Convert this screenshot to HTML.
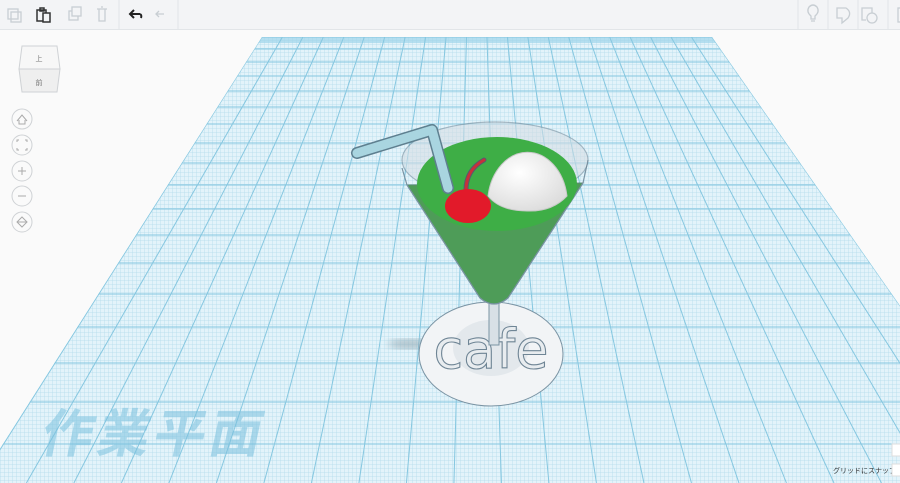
<!DOCTYPE html>
<html><head><meta charset="utf-8"><style>
html,body{margin:0;padding:0}
body{width:900px;height:483px;overflow:hidden;background:#fafafa;position:relative;font-family:"Liberation Sans","Noto Sans CJK JP",sans-serif}
#tb{position:absolute;left:0;top:0;width:900px;height:29px;background:#f3f4f6;border-bottom:1px solid #e2e5e8}
</style></head><body>
<svg width="900" height="483" style="position:absolute;left:0;top:0">
<defs>
<clipPath id="gc"><polygon points="262,37 712,37 1024,483 -22,483"/></clipPath>
<pattern id="fine" width="4" height="4" patternUnits="userSpaceOnUse"><path d="M0 0H4M0 0V4" stroke="#b3dcec" stroke-width="0.8" fill="none"/></pattern>
<filter id="bl"><feGaussianBlur stdDeviation="4"/></filter>
<radialGradient id="bg" cx="0.4" cy="0.35" r="0.7"><stop offset="0" stop-color="#ffffff"/><stop offset="1" stop-color="#dcdcdc"/></radialGradient>
</defs>
<g clip-path="url(#gc)">
<rect x="0" y="0" width="900" height="483" fill="#e3f3fa"/>
<rect x="0" y="0" width="900" height="483" fill="url(#fine)"/>
<polygon points="262,37 712,37 716,43 258,43" fill="#9fd4ea" opacity=".7"/>
<g stroke="#86c7e0" stroke-width="1" id="vl"></g>
<g stroke="#86c7e0" stroke-width="1" id="hl"></g>
<text x="40" y="452" font-size="52" font-weight="bold" fill="#7cc1de" opacity=".55" transform="skewX(-12) translate(95,0)" font-family="'Noto Sans CJK JP',sans-serif" letter-spacing="4">作業平面</text>
</g>
<ellipse cx="410" cy="344" rx="22" ry="5" fill="#8aa0aa" opacity=".6" filter="url(#bl)"/>
<!-- base disc -->
<ellipse cx="491" cy="354" rx="72" ry="52" fill="#f2f4f6" stroke="#7a93a3" stroke-width="1"/>
<ellipse cx="491" cy="348" rx="38" ry="28" fill="#dfe5ea" opacity=".8"/>
<text x="491" y="368" text-anchor="middle" font-size="54" fill="#e8ecef" stroke="#6f8595" stroke-width="1.1" font-family="'DejaVu Sans',sans-serif">cafe</text>
<rect x="489" y="295" width="10" height="50" fill="#d8e0e6" stroke="#7a93a3" stroke-width="1"/>
<!-- cone -->
<path d="M407 185 L480 298 Q494 310 508 298 L583 183 Z" fill="#4e9c58" stroke="#5d8a74" stroke-width="1"/>
<path d="M402 168 L407 185 L480 298 Q494 310 508 298 L583 183 L588 160" fill="none" stroke="#7a93a3" stroke-width="1.2"/>
<ellipse cx="495" cy="160" rx="93" ry="38" fill="#d5dde3" opacity=".55" stroke="#6f8595" stroke-width="1.2"/>
<ellipse cx="497" cy="184" rx="80" ry="47" fill="#3eae46"/>
<!-- ball hemisphere -->
<path d="M488 196 A40 52 0 0 1 567 196 Q552 212 527 211 Q500 211 488 196 Z" fill="url(#bg)" stroke="#c9c9c9" stroke-width="1"/>
<path d="M357 153 L432 130 L448 188" fill="none" stroke="#5e7f8f" stroke-width="12" stroke-linejoin="round" stroke-linecap="round"/>
<path d="M357 153 L432 130 L448 188" fill="none" stroke="#a9d5e0" stroke-width="9" stroke-linejoin="round" stroke-linecap="round"/>
<path d="M466 190 Q466 170 484 160" fill="none" stroke="#51606e" stroke-width="5" stroke-linecap="round"/>
<path d="M466 190 Q466 170 484 160" fill="none" stroke="#c8303a" stroke-width="3" stroke-linecap="round"/>
<ellipse cx="468" cy="206" rx="23" ry="17" fill="#e21a2a"/>
<!-- left controls -->
<g fill="#fafafa" stroke="#cfd2d5">
<path d="M22 46 H57 L60 69 H19 Z" fill="#f7f7f7"/>
<path d="M19 69 H60 L57 92 H22 Z" fill="#efefef"/>
<circle cx="22" cy="119" r="10"/><circle cx="22" cy="145" r="10"/><circle cx="22" cy="171" r="10"/><circle cx="22" cy="196" r="10"/><circle cx="22" cy="222" r="10"/>
</g>
<text x="39" y="61" font-size="7" fill="#777" text-anchor="middle">上</text>
<text x="39" y="85" font-size="7" fill="#777" text-anchor="middle">前</text>
<g stroke="#aaa" fill="none" stroke-width="1">
<path d="M17 121 L22 115 L27 121 M19 120 V124 H25 V120"/>
<path d="M17 142 V140 H19 M25 140 H27 V142 M27 148 V150 H25 M19 150 H17 V148"/>
<path d="M18 171 H26 M22 167 V175"/><path d="M18 196 H26"/>
<path d="M22 217 L27 222 L22 227 L17 222 Z M17 222 H27"/>
</g>
<text x="833" y="473" font-size="7" fill="#333">グリッドにスナップ</text>
<rect x="892" y="444" width="10" height="12" fill="#fff" stroke="#ddd"/>
<rect x="892" y="464" width="10" height="12" fill="#fff" stroke="#ddd"/>
</svg>
<div id="tb"></div>
<svg width="900" height="30" style="position:absolute;left:0;top:0">
<line x1="119" y1="0" x2="119" y2="29" stroke="#e2e5e8"/>
<line x1="178" y1="0" x2="178" y2="29" stroke="#e2e5e8"/>
<line x1="798" y1="0" x2="798" y2="29" stroke="#e2e5e8"/>
<line x1="828" y1="0" x2="828" y2="29" stroke="#e2e5e8"/>
<line x1="858" y1="0" x2="858" y2="29" stroke="#e2e5e8"/>
<line x1="888" y1="0" x2="888" y2="29" stroke="#e2e5e8"/>
<g fill="none" stroke="#c8ced3" stroke-width="1.3">
<rect x="8" y="9" width="10" height="10"/><rect x="11" y="12" width="10" height="10"/>
<rect x="69" y="11" width="9" height="9"/><rect x="72" y="7" width="9" height="9" fill="#f3f4f6"/>
<path d="M97 9 H107 M99 9 V21 H105 V9 M101 7 H103"/>
<path d="M164 14 H156 M159 11 L156 14 L159 17"/>
<path d="M842 23 V18 H837 V8 H846 Q852 12 848 18 Z"/>
<path d="M866 20 H862 V8 H872 V13"/><circle cx="872" cy="18" r="5"/>
<rect x="898" y="8" width="3" height="14"/>
</g>
<path d="M811 16 Q806 12 809 7 Q813 3 817 7 Q820 12 815 16 V19 H811 Z M811 21 H815" fill="none" stroke="#c8ced3" stroke-width="1.3"/>
<g fill="none" stroke="#333" stroke-width="1.5">
<rect x="37" y="10" width="9" height="11"/><rect x="43" y="13" width="7" height="9" fill="#f3f4f6"/><path d="M40 8 H44 V11 H40 Z"/>
</g>
<path d="M140 14 H131 M134 10 L130 14 L134 18 M140 14 Q142 15 141 18" fill="none" stroke="#222" stroke-width="2"/>
</svg>
<script>
var vl=document.getElementById('vl'),hl=document.getElementById('hl'),ns='http://www.w3.org/2000/svg';
for(var i=-2;i<26;i++){var x0=262+20.45*i,x1=476+(x0-476)*2.323;var l=document.createElementNS(ns,'line');l.setAttribute('x1',x0);l.setAttribute('y1',37);l.setAttribute('x2',x1);l.setAttribute('y2',483);vl.appendChild(l);}
var ys=[37,49,62,76,91,107,124,143,163,185,209,235,263,294,327,363,402,444,490];
ys.forEach(function(y){var l=document.createElementNS(ns,'line');l.setAttribute('x1',-30);l.setAttribute('y1',y);l.setAttribute('x2',1030);l.setAttribute('y2',y);hl.appendChild(l);});
</script>
</body></html>
